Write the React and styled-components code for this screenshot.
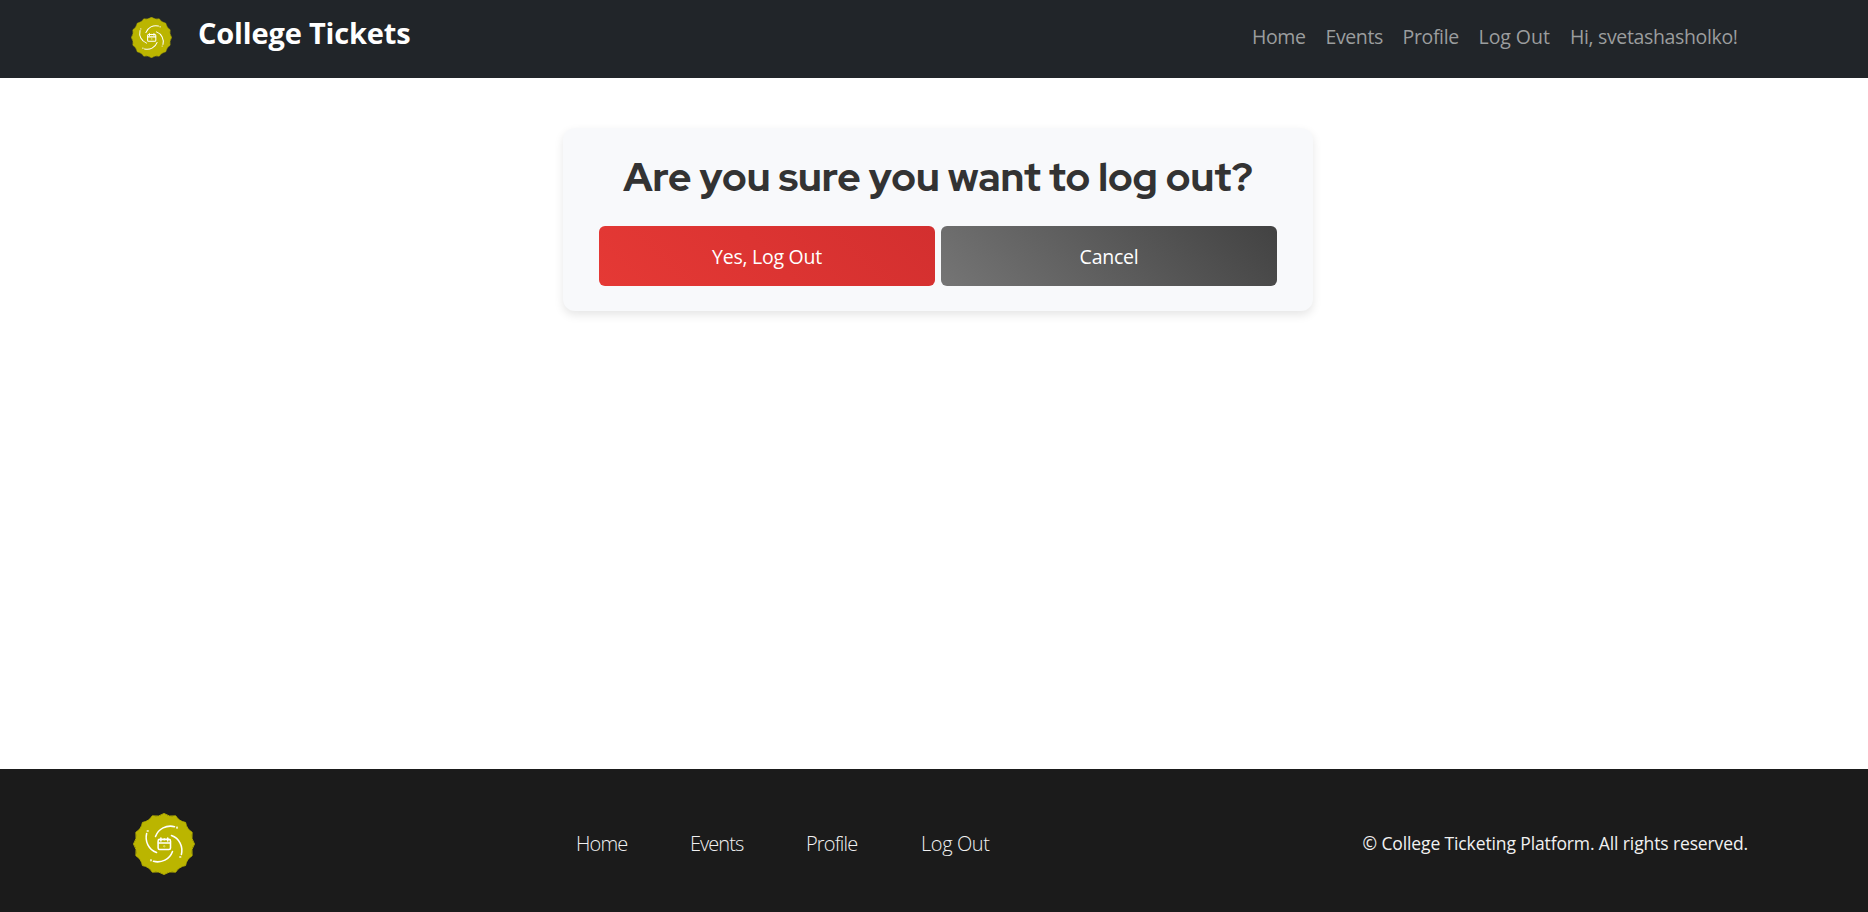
import React from "react";
import styled, { createGlobalStyle } from "styled-components";

const GlobalStyle = createGlobalStyle`
  *, *::before, *::after { box-sizing: border-box; }
  body {
    margin: 0;
    background: #fff;
    font-family: "Segoe UI", "Open Sans", "Noto Sans", sans-serif;
    font-size: 20px;
    overflow: hidden;
  }
`;

const Page = styled.div`
  display: flex;
  flex-direction: column;
  height: 100vh;
`;

const Header = styled.header`
  display: flex;
  align-items: center;
  justify-content: space-between;
  height: 78px;
  padding: 0 130px 3px 131px;
  background: #212529;
`;

const Brand = styled.a`
  display: flex;
  align-items: center;
  color: #fff;
  text-decoration: none;
`;

const BrandName = styled.span`
  margin: 0 0 9px 26px;
  font-size: 29px;
  font-weight: 700;
  line-height: 36px;
  letter-spacing: -0.17px;
  white-space: nowrap;
`;

const Nav = styled.nav`
  display: flex;
  gap: 20px;
  padding-bottom: 2px;
`;

const NavLink = styled.a`
  width: ${(p) => p.$width}px;
  color: #9b9d9e;
  font-size: 19.5px;
  line-height: 30px;
  letter-spacing: ${(p) => p.$tracking || 0}px;
  text-decoration: none;
  white-space: nowrap;
`;

const Main = styled.main`
  flex: 1;
  display: flex;
  justify-content: center;
  align-items: flex-start;
  padding: 50px 0 0 8px;
`;

const Card = styled.section`
  width: 750px;
  height: 183px;
  padding: 25px 36px;
  border-radius: 12px;
  background: #f8f9fb;
  box-shadow: 0 4px 10px rgba(0, 0, 0, 0.1);
`;

const Title = styled.h1`
  margin: 0 0 25px;
  color: #333;
  font-family: "Red Hat Display", Inter, sans-serif;
  font-size: 40px;
  font-weight: 800;
  line-height: 48px;
  text-align: center;
  white-space: nowrap;
`;

const Actions = styled.div`
  display: flex;
  gap: 6px;
`;

const Button = styled.button`
  flex: 1;
  height: 60px;
  padding: 1px 0 0;
  border: 0;
  border-radius: 6px;
  color: #fff;
  font: 400 19.5px "Segoe UI", "Open Sans", sans-serif;
  letter-spacing: -0.25px;
  background: ${(p) =>
    p.$danger
      ? "linear-gradient(45deg, #e53935, #d32f2f)"
      : "linear-gradient(45deg, #757575, #424242)"};
`;

const Footer = styled.footer`
  display: flex;
  align-items: center;
  height: 143px;
  padding: 6px 120px 0 133px;
  background: #1b1b1b;
`;

const FooterLinks = styled.nav`
  display: flex;
  gap: 63px;
  margin-left: 381px;
`;

const FooterLink = styled.a`
  width: ${(p) => p.$width}px;
  color: #f1f1f1;
  font-size: 20px;
  font-weight: 300;
  line-height: 30px;
  letter-spacing: ${(p) => p.$tracking || 0}px;
  text-decoration: none;
  white-space: nowrap;
`;

const Copyright = styled.p`
  margin: 0 0 1px auto;
  color: #f1f1f1;
  font-size: 17.5px;
  letter-spacing: -0.12px;
  white-space: nowrap;
`;

const scallop = (() => {
  const n = 16;
  const pt = (r, a) => `${(50 + r * Math.sin(a)).toFixed(2)} ${(50 - r * Math.cos(a)).toFixed(2)}`;
  let d = `M${pt(49.2, 0)}`;
  for (let i = 0; i < n; i++) {
    const a = (i * 2 * Math.PI) / n;
    d += `Q${pt(43.8, a + Math.PI / n)} ${pt(49.2, a + (2 * Math.PI) / n)}`;
  }
  return d + "Z";
})();

function Logo({ size }) {
  return (
    <svg width={size} height={size} viewBox="0 0 100 100" aria-hidden="true">
      <path d={scallop} fill="#bbb500" stroke="#bbb500" strokeWidth="1.4" strokeLinejoin="round" />
      <g fill="none" stroke="#fff" strokeLinecap="round" strokeWidth="2.5">
        {[0, 90, 180, 270].map((a) => (
          <g key={a} transform={`rotate(${a} 50 50)`}>
            <path d="M36.3 38C41 25 54 19 67 22" />
            <circle cx="71" cy="23.7" r="0.5" />
          </g>
        ))}
        <rect x="40.5" y="42.5" width="20" height="16.5" rx="2.5" />
        <path d="M41 48.5H60M45 40.5V45M50.5 42V43M56 40.5V45" />
        <circle cx="50.5" cy="53.5" r="0.3" />
      </g>
    </svg>
  );
}

export default function App() {
  return (
    <Page>
      <GlobalStyle />
      <Header>
        <Brand href="#">
          <Logo size={41} />
          <BrandName>College Tickets</BrandName>
        </Brand>
        <Nav>
          <NavLink href="#" $width={53.5} $tracking={-0.4}>Home</NavLink>
          <NavLink href="#" $width={57} $tracking={-0.4}>Events</NavLink>
          <NavLink href="#" $width={56} $tracking={-0.35}>Profile</NavLink>
          <NavLink href="#" $width={71.5} $tracking={-0.05}>Log Out</NavLink>
          <NavLink href="#" $width={168} $tracking={-0.35}>Hi, svetashasholko!</NavLink>
        </Nav>
      </Header>
      <Main>
        <Card>
          <Title>Are you sure you want to log out?</Title>
          <Actions>
            <Button $danger>Yes, Log Out</Button>
            <Button>Cancel</Button>
          </Actions>
        </Card>
      </Main>
      <Footer>
        <Logo size={62} />
        <FooterLinks>
          <FooterLink href="#" $width={51} $tracking={-0.85}>Home</FooterLink>
          <FooterLink href="#" $width={53} $tracking={-0.95}>Events</FooterLink>
          <FooterLink href="#" $width={52} $tracking={-0.85}>Profile</FooterLink>
          <FooterLink href="#" $width={69} $tracking={-0.4}>Log Out</FooterLink>
        </FooterLinks>
        <Copyright>© College Ticketing Platform. All rights reserved.</Copyright>
      </Footer>
    </Page>
  );
}
